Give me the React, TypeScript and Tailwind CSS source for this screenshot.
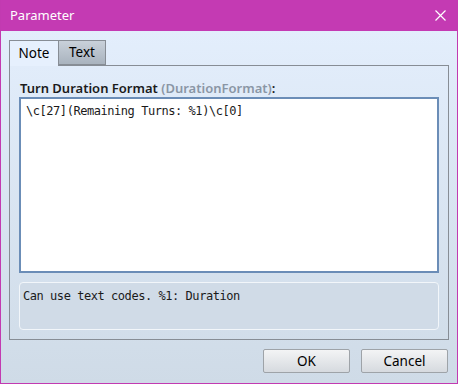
export default function App() {
  return (
    <div className="w-[458px] h-[384px] flex flex-col border-x border-b border-[#c23ab1] font-['Noto_Sans',sans-serif] select-none">
      {/* title bar */}
      <div className="h-[31px] shrink-0 bg-[#c43ab3] flex items-center justify-between pl-[9px] pr-[11px]">
        <span className="text-[13px] text-white leading-none">Parameter</span>
        <svg width="11" height="11" viewBox="0 0 11 11" className="text-white">
          <path d="M0.5 0.5 L10.5 10.5 M10.5 0.5 L0.5 10.5" stroke="currentColor" strokeWidth="1.2" />
        </svg>
      </div>

      {/* body */}
      <div className="flex-1 flex flex-col bg-gradient-to-b from-[#e3eefc] to-[#cfdbe7] px-[8px] pt-[9px]">
        {/* tabs */}
        <div className="flex h-[25px] items-end">
          <div className="h-[26px] w-[50px] -mb-px z-10 border border-b-0 border-[#878d95] bg-[#e6f0fd] flex items-center justify-center text-[13.5px] text-black">
            Note
          </div>
          <div className="h-[25px] w-[48px] -ml-px border border-[#878d95] bg-gradient-to-b from-[#c9d1da] to-[#a9b3be] flex items-center justify-center text-[13.5px] text-black">
            Text
          </div>
        </div>

        {/* panel */}
        <div className="h-[275px] border border-[#878d95] px-[9px] pt-[13px] flex flex-col">
          <div className="h-[18px] pl-px text-[13px] font-semibold text-[#1b1b1b] leading-[18px]">
            Turn Duration Format <span className="text-[#8a96a5]">(DurationFormat)</span>:
          </div>
          <div className="h-[176px] border-2 border-[#6b8db7] bg-white px-[5px] pt-[3px] font-['DejaVu_Sans_Mono',monospace] text-[12px] tracking-[-0.45px] text-[#1a1a1a] leading-[18px]">
            \c[27](Remaining Turns: %1)\c[0]
          </div>
          <div className="mt-[9px] h-[48px] rounded-[4px] border border-[#f2f6fa] bg-[#d0dbe7] px-[3px] pt-[4px] font-['DejaVu_Sans_Mono',monospace] text-[12px] tracking-[-0.45px] text-[#1a1a1a] leading-[18px]">
            Can use text codes. %1: Duration
          </div>
        </div>

        {/* buttons */}
        <div className="flex justify-end gap-[11px] pt-[9px] pr-px">
          <button className="w-[87px] h-[24px] rounded-[2px] border border-[#9ea3a8] bg-gradient-to-b from-[#f3f4f5] to-[#d6dadf] text-[13.5px] text-black">
            OK
          </button>
          <button className="w-[87px] h-[24px] rounded-[2px] border border-[#9ea3a8] bg-gradient-to-b from-[#f3f4f5] to-[#d6dadf] text-[13.5px] text-black">
            Cancel
          </button>
        </div>
      </div>
    </div>
  );
}
